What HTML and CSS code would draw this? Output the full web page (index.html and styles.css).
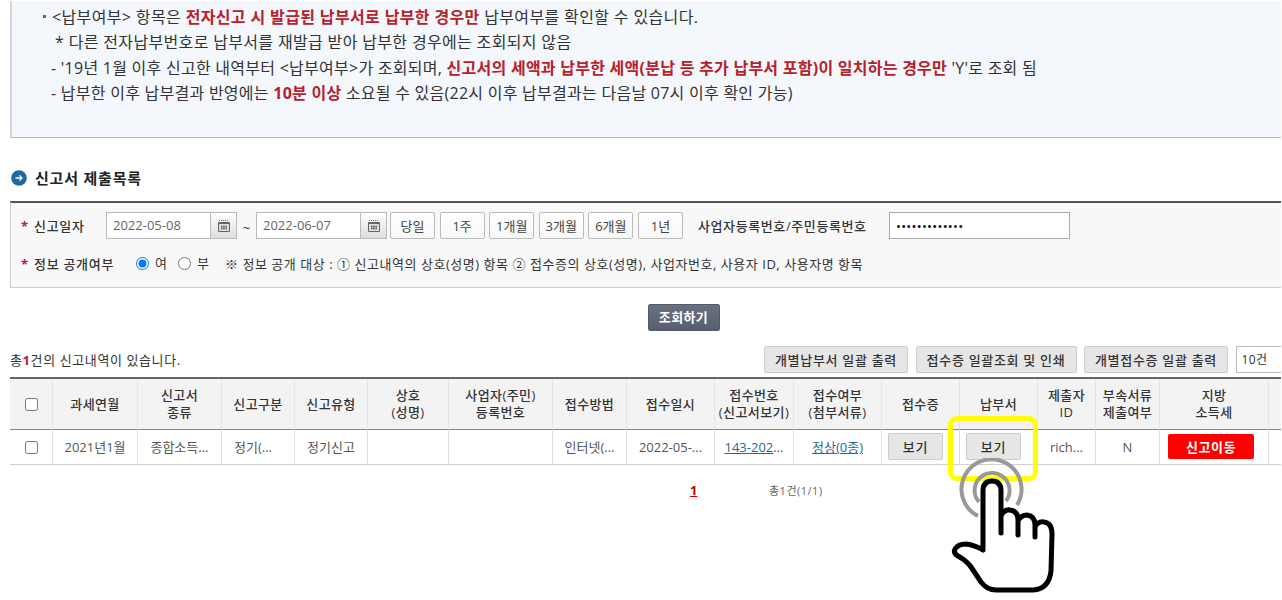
FILE: index.html
```html
<!DOCTYPE html>
<html lang="ko">
<head>
    <meta charset="UTF-8">
    <meta name="viewport" content="width=device-width, initial-scale=1.0">
    <title>신고서 제출목록</title>
    <link rel="stylesheet" href="styles.css">
</head>
<body>
    <div class="page">
        <div class="notice">
            <p class="n1"><i class="dot"></i>&lt;납부여부&gt; 항목은 <strong>전자신고 시 발급된 납부서로 납부한 경우만</strong> 납부여부를 확인할 수 있습니다.</p>
            <p class="n2">* 다른 전자납부번호로 납부서를 재발급 받아 납부한 경우에는 조회되지 않음</p>
            <p class="n3">- '19년 1월 이후 신고한 내역부터 &lt;납부여부&gt;가 조회되며, <strong>신고서의 세액과 납부한 세액(분납 등 추가 납부서 포함)이 일치하는 경우만</strong> 'Y'로 조회 됨</p>
            <p class="n4">- 납부한 이후 납부결과 반영에는 <strong>10분 이상</strong> 소요될 수 있음(22시 이후 납부결과는 다음날 07시 이후 확인 가능)</p>
        </div>

        <h2 class="title">
            <svg width="16" height="16" viewBox="0 0 16 16">
                <circle cx="8" cy="8" r="7.8" fill="#1b69a5"/>
                <path d="M4.5 8h6.5M8.4 5.4L11 8l-2.6 2.6" fill="none" stroke="#fff" stroke-width="1.3"/>
            </svg>
            <span>신고서 제출목록</span>
        </h2>

        <form class="search">
            <div class="row">
                <label class="name"><b>*</b>신고일자</label>
                <div class="date">
                    <input type="text" value="2022-05-08">
                    <button type="button" class="cal">
                        <svg width="12" height="12" viewBox="0 0 12 12"><path d="M1 .5h10" stroke="#777" stroke-dasharray="1 1"/><path d="M.5 2.5h11v9H.5z" fill="#ddd" stroke="#666"/><path d="M1 3.5h10" stroke="#666"/><path d="M3 6.5h6M3 8.5h6" stroke="#555" stroke-width="1.4" stroke-dasharray="1.5 .7"/></svg>
                    </button>
                </div>
                <span class="tilde">~</span>
                <div class="date">
                    <input type="text" value="2022-06-07">
                    <button type="button" class="cal">
                        <svg width="12" height="12" viewBox="0 0 12 12"><path d="M1 .5h10" stroke="#777" stroke-dasharray="1 1"/><path d="M.5 2.5h11v9H.5z" fill="#ddd" stroke="#666"/><path d="M1 3.5h10" stroke="#666"/><path d="M3 6.5h6M3 8.5h6" stroke="#555" stroke-width="1.4" stroke-dasharray="1.5 .7"/></svg>
                    </button>
                </div>
                <div class="period">
                    <button type="button">당일</button>
                    <button type="button">1주</button>
                    <button type="button">1개월</button>
                    <button type="button">3개월</button>
                    <button type="button">6개월</button>
                    <button type="button">1년</button>
                </div>
                <label class="regno">사업자등록번호/주민등록번호</label>
                <input type="password" class="pw" value="1234567890123">
            </div>
            <div class="row open">
                <label class="name"><b>*</b>정보 공개여부</label>
                <input type="radio" name="open" checked><span class="opt">여</span>
                <input type="radio" name="open"><span class="opt">부</span>
                <span class="guide">※ 정보 공개 대상 : ① 신고내역의 상호(성명) 항목 ② 접수증의 상호(성명), 사업자번호, 사용자 ID, 사용자명 항목</span>
            </div>
        </form>

        <div class="submit"><button type="button">조회하기</button></div>

        <div class="toolbar">
            <p>총<b>1</b>건의 신고내역이 있습니다.</p>
            <button type="button" class="w1">개별납부서 일괄 출력</button>
            <button type="button" class="w2">접수증 일괄조회 및 인쇄</button>
            <button type="button" class="w1">개별접수증 일괄 출력</button>
            <div class="count">10건</div>
        </div>

        <table>
            <colgroup>
                <col class="c1"><col class="c2"><col class="c3"><col class="c4"><col class="c5"><col class="c6">
                <col class="c7"><col class="c8"><col class="c9"><col class="c10"><col class="c11"><col class="c12">
                <col class="c13"><col class="c14"><col class="c15"><col class="c16"><col class="c17">
            </colgroup>
            <thead>
                <tr>
                    <th><input type="checkbox"></th>
                    <th>과세연월</th>
                    <th>신고서<br>종류</th>
                    <th>신고구분</th>
                    <th>신고유형</th>
                    <th>상호<br>(성명)</th>
                    <th>사업자(주민)<br>등록번호</th>
                    <th>접수방법</th>
                    <th>접수일시</th>
                    <th>접수번호<br>(신고서보기)</th>
                    <th>접수여부<br>(첨부서류)</th>
                    <th>접수증</th>
                    <th>납부서</th>
                    <th>제출자<br>ID</th>
                    <th>부속서류<br>제출여부</th>
                    <th>지방<br>소득세</th>
                    <th></th>
                </tr>
            </thead>
            <tbody>
                <tr>
                    <td><input type="checkbox"></td>
                    <td>2021년1월</td>
                    <td>종합소득...</td>
                    <td class="left">정기(...</td>
                    <td>정기신고</td>
                    <td></td>
                    <td></td>
                    <td>인터넷(...</td>
                    <td>2022-05-...</td>
                    <td><a href="#">143-202</a>...</td>
                    <td><a href="#">정상(0종)</a></td>
                    <td><button type="button" class="view">보기</button></td>
                    <td class="target">
                        <button type="button" class="view">보기</button>
                        <div class="mark"></div>
                        <svg class="hand" width="108" height="140" viewBox="0 0 108 140">
                            <g fill="none" stroke="#999" stroke-width="4">
                                <path d="M27 58A30 30 0 1 1 66 47"/>
                                <path d="M28 44A17.500 17.500 0 1 1 55 43"/>
                            </g>
                            <path d="M32 93V33Q32 24 41 24T50 33V56Q53 51 59 51Q66 52 67 60Q70 57 76 57Q83 58 84 66Q87 63 93 63Q101 64 101 74L100 115Q99 131 83 132H44Q35 132 29 124L19 110Q15 103 6 98Q-1 92 6 88Q13 84 22 88Q28 91 32 93Z" fill="#fff"/>
                            <path d="M32 92V33Q32 23 41 23T50 33V75M50 58Q53 51 59 52Q67 53 67 62V77M67 63Q70 57 76 57Q84 58 84 67V79M84 69Q87 63 93 64Q101 65 101 76L100 113Q98 131 82 132H45Q36 132 30 124L20 109Q16 103 7 98Q2 95 4 91Q7 86 15 86Q24 87 32 92" fill="none" stroke="#000" stroke-width="5" stroke-linecap="round" stroke-linejoin="round"/>
                        </svg>
                    </td>
                    <td>rich...</td>
                    <td>N</td>
                    <td><button type="button" class="move">신고이동</button></td>
                    <td></td>
                </tr>
            </tbody>
        </table>

        <div class="paging">
            <a href="#">1</a>
            <span>총1건(1/1)</span>
        </div>
    </div>
</body>
</html>
```
FILE: styles.css
```css
* {
    box-sizing: border-box;
}
body {
    margin: 0;
    background-color: #fff;
    color: #333;
    font-family: "Open Sans", "Noto Sans CJK KR", sans-serif;
    font-size: 13px;
}
button, input {
    font-family: inherit;
    margin: 0;
}
p {
    margin: 0;
}
.page {
    width: 1271px;
    height: 600px;
    margin-left: 10px;
    padding-top: 1px;
    white-space: nowrap;
}
.notice {
    height: 137px;
    padding: 4px 0 0 40px;
    background-color: #f4f7fc;
    border-left: 2px solid #d3d7dd;
    border-bottom: 1px solid #b4b8bd;
    font-size: 16px;
    line-height: 25.3px;
}
.notice p {
    position: relative;
}
.notice strong {
    color: #b8202a;
}
.dot {
    position: absolute;
    left: -9px;
    top: 10px;
    width: 3px;
    height: 3px;
    background-color: #667;
}
.notice .n1 {
    letter-spacing: 0.36px;
}
.notice .n2 {
    padding-left: 3px;
    letter-spacing: 0.34px;
}
.notice .n3, .notice .n4 {
    margin-left: -1px;
    letter-spacing: 0.26px;
}
.title {
    display: flex;
    align-items: center;
    gap: 8px;
    height: 24px;
    margin: 28px 0 11px 1px;
    font-size: 15px;
    letter-spacing: 0.8px;
    color: #222;
}
.title span {
    margin-top: -1px;
}
.search {
    height: 87px;
    padding: 9px 0 0 10px;
    background-color: #f8f8f8;
    border-top: 2px solid #555;
    border-left: 1px solid #ccc;
    border-bottom: 1px solid #ccc;
}
.row {
    display: flex;
    align-items: center;
    height: 27px;
}
.name {
    width: 85px;
    font-weight: 500;
    letter-spacing: 0.7px;
}
.name b {
    display: inline-block;
    width: 13px;
    color: #b8202a;
}
.date {
    display: flex;
}
.date input {
    width: 105px;
    height: 27px;
    padding: 0 6px 2px;
    border: 1px solid #bbb;
    color: #666;
    font-size: 13px;
}
.cal {
    display: flex;
    align-items: center;
    justify-content: center;
    width: 26px;
    height: 27px;
    padding: 0;
    border: 1px solid #bbb;
    border-left: 0;
    background: linear-gradient(#fff, #ddd);
}
.tilde {
    width: 19px;
    padding-top: 5px;
    text-align: center;
}
.period {
    display: flex;
    gap: 4.6px;
    margin-left: 3px;
}
.period button {
    width: 45px;
    height: 27px;
    padding: 0 0 1px;
    border: 1px solid #bbb;
    border-radius: 2px;
    background: linear-gradient(#fff, #f7f7f7);
    color: #444;
    font-size: 13px;
}
.regno {
    width: 191px;
    margin-left: 15px;
    font-weight: 500;
    letter-spacing: 0.6px;
}
.pw {
    width: 181px;
    height: 27px;
    padding: 0 6px;
    border: 1px solid #aaa;
    font-size: 13px;
    letter-spacing: 0.3px;
}
.open {
    margin-top: 11px;
}
.open .name {
    width: 115px;
}
.open input {
    width: 13px;
    height: 13px;
    margin-top: -1px;
}
.opt {
    width: 29px;
    padding: 0 0 3px 6px;
}
.guide {
    margin-left: 5px;
    font-size: 13px;
    letter-spacing: 0.54px;
}
.submit {
    display: flex;
    justify-content: center;
    padding: 16px 0 0 76px;
}
.submit button {
    width: 72px;
    height: 27px;
    padding: 0 0 2px;
    border: 1px solid #555b68;
    border-radius: 2px;
    background: linear-gradient(#697080, #575e6d);
    color: #fff;
    font-size: 13px;
    font-weight: bold;
    letter-spacing: 0.4px;
}
.toolbar {
    display: flex;
    align-items: center;
    height: 27px;
    margin: 15px 0 4px;
}
.toolbar p {
    width: 754px;
    letter-spacing: 0.6px;
}
.toolbar b {
    color: #b8202a;
}
.toolbar button, .view {
    height: 27px;
    margin-right: 7.5px;
    padding: 0 0 1px;
    border: 1px solid #ccc;
    border-radius: 2px;
    background-color: #e7e6e6;
    color: #333;
    font-size: 13px;
    font-weight: 500;
    letter-spacing: 0.7px;
}
.toolbar .w1 {
    width: 144px;
}
.toolbar .w2 {
    width: 161px;
}
.count {
    flex: 1;
    height: 27px;
    padding-left: 5px;
    border: 1px solid #bbb;
    border-right: 0;
    line-height: 25px;
    font-size: 12px;
    letter-spacing: 0.4px;
}
table {
    width: 1271px;
    table-layout: fixed;
    border-collapse: separate;
    border-spacing: 0;
    border-top: 2px solid #666;
}
.c1 { width: 43px; }
.c2 { width: 85px; }
.c3 { width: 84px; }
.c4 { width: 73px; }
.c5 { width: 73px; }
.c6 { width: 81px; }
.c7 { width: 104px; }
.c8 { width: 74px; }
.c9 { width: 88px; }
.c10 { width: 79px; }
.c11 { width: 88px; }
.c12 { width: 78px; }
.c13 { width: 78px; }
.c14 { width: 58px; }
.c15 { width: 64px; }
.c16 { width: 109px; }
.c17 { width: 12px; }
th {
    height: 51px;
    padding: 0;
    border-right: 1px solid #e6e4e4;
    border-bottom: 1px solid #888;
    background-color: #f4f3f3;
    font-size: 13px;
    font-weight: 500;
    line-height: 17px;
    letter-spacing: 0.4px;
}
td {
    height: 35px;
    padding: 0;
    border-right: 1px solid #ddd;
    border-bottom: 1px solid #d0d0d0;
    color: #555;
    line-height: 20px;
    text-align: center;
}
th:last-child, td:last-child {
    border-right: 0;
}
td.left {
    padding-left: 12px;
    text-align: left;
}
th input, td input {
    display: block;
    width: 13px;
    height: 13px;
    margin: 0 auto;
}
td a {
    color: #1f6a99;
}
.view {
    display: block;
    width: 55px;
    margin: -1px 0 0 6px;
}
.move {
    display: block;
    width: 86px;
    height: 25px;
    margin: -1px 0 0 8px;
    padding: 0;
    border: 0;
    border-radius: 2px;
    background-color: #f00;
    color: #fff;
    font-size: 13px;
    font-weight: bold;
    letter-spacing: 0.5px;
}
.target {
    position: relative;
}
.mark {
    position: absolute;
    left: -12px;
    top: -14px;
    width: 90px;
    height: 65px;
    border: 5px solid #ff0;
    border-radius: 9px;
}
.hand {
    position: absolute;
    left: -9px;
    top: 28px;
}
.paging {
    display: flex;
    align-items: center;
    height: 24px;
    margin: 13px 0 0 680px;
}
.paging a {
    width: 79px;
    color: #c00;
    font-weight: bold;
}
.paging span {
    color: #666;
    font-size: 11px;
    letter-spacing: 0.5px;
}
```
